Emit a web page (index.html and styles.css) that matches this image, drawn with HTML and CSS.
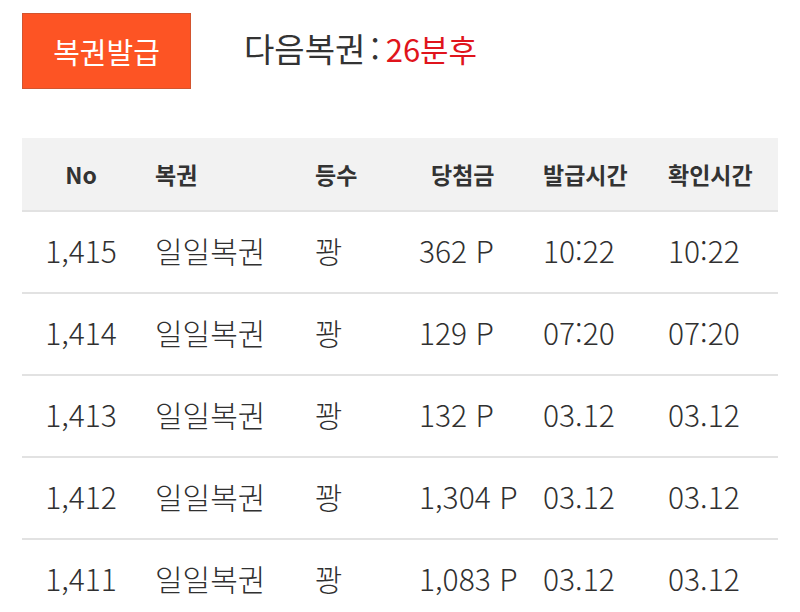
FILE: index.html
```html
<!DOCTYPE html>
<html lang="ko">
<head>
<meta charset="utf-8">
<link rel="stylesheet" href="styles.css">
</head>
<body>
<div class="top">
  <button class="issue">복권발급</button>
  <div class="next">다음복권<span class="colon">:</span><span class="time">26분후</span></div>
</div>
<table class="list">
  <colgroup>
    <col class="c1"><col class="c2"><col class="c3"><col class="c4"><col class="c5"><col class="c6">
  </colgroup>
  <thead>
    <tr><th class="no">No</th><th>복권</th><th>등수</th><th class="prize">당첨금</th><th>발급시간</th><th>확인시간</th></tr>
  </thead>
  <tbody>
    <tr><td class="no">1,415</td><td>일일복권</td><td>꽝</td><td>362 P</td><td>10:22</td><td>10:22</td></tr>
    <tr><td class="no">1,414</td><td>일일복권</td><td>꽝</td><td>129 P</td><td>07:20</td><td>07:20</td></tr>
    <tr><td class="no">1,413</td><td>일일복권</td><td>꽝</td><td>132 P</td><td>03.12</td><td>03.12</td></tr>
    <tr><td class="no">1,412</td><td>일일복권</td><td>꽝</td><td>1,304 P</td><td>03.12</td><td>03.12</td></tr>
    <tr><td class="no">1,411</td><td>일일복권</td><td>꽝</td><td>1,083 P</td><td>03.12</td><td>03.12</td></tr>
  </tbody>
</table>
</body>
</html>
```
FILE: styles.css
```css
html, body {
  margin: 0;
  padding: 0;
  background: #ffffff;
}
body {
  font-family: "Noto Sans CJK KR", sans-serif;
  color: #333333;
  overflow: hidden;
}
.top {
  display: flex;
  align-items: center;
  padding: 13px 0 0 22px;
  gap: 53px;
}
.issue {
  width: 169px;
  height: 76px;
  background: #fd5424;
  border: 1px solid #d2542e;
  color: #ffffff;
  font-family: "Noto Sans CJK KR", sans-serif;
  font-size: 29px;
  line-height: 1;
  padding: 0;
  margin: 0;
}
.next {
  font-size: 33px;
  line-height: 1;
  color: #333333;
  margin-top: -6px;
}
.colon {
  margin: 0 6px 0 5px;
}
.time {
  color: #e0141c;
  font-size: 31px;
}
.list {
  margin: 49px 0 0 22px;
  width: 756px;
  border-collapse: collapse;
  table-layout: fixed;
}
.c1 { width: 118px; }
.c2 { width: 160px; }
.c3 { width: 104px; }
.c4 { width: 124px; }
.c5 { width: 125px; }
.c6 { width: 125px; }
th, td {
  text-align: left;
  padding: 0 0 0 15px;
  white-space: nowrap;
  line-height: 1;
}
th {
  background: #f2f2f2;
  height: 72px;
  font-size: 23px;
  font-weight: 700;
  border-bottom: 2px solid #e2e2e2;
}
th.prize {
  padding-left: 27px;
}
td {
  height: 76px;
  font-size: 30px;
  font-weight: 300;
  color: #303030;
  padding-bottom: 4px;
  border-bottom: 2px solid #e2e2e2;
}
th.no, td.no {
  text-align: center;
  padding-left: 0;
}
```
